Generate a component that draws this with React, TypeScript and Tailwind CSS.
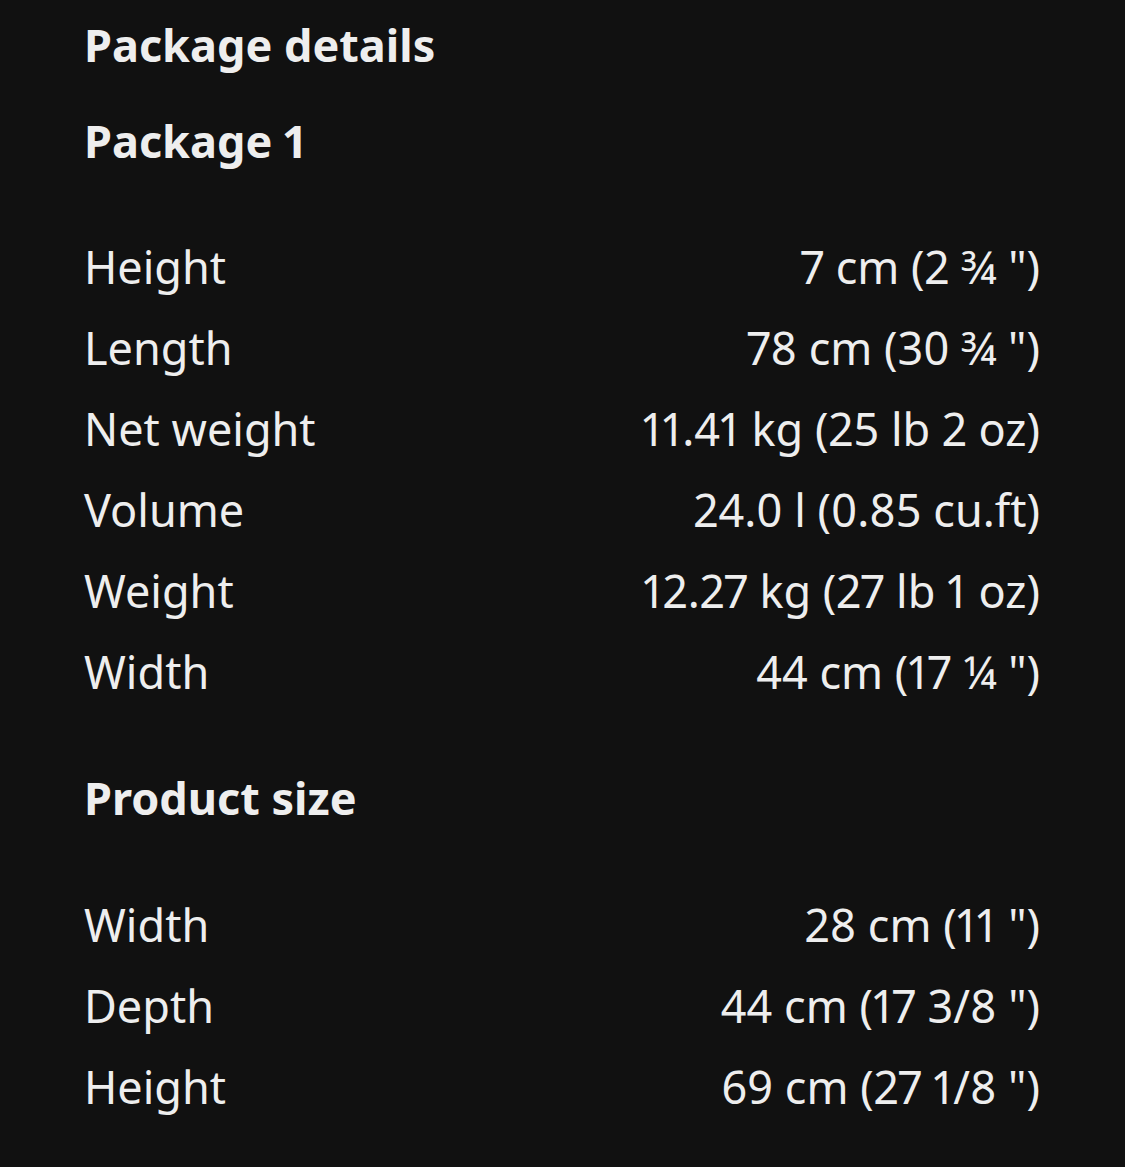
import React from "react";

const pkg: [string, string][] = [
  ["Height", '7 cm (2 ¾ ")'],
  ["Length", '78 cm (30 ¾ ")'],
  ["Net weight", "11.41 kg (25 lb 2 oz)"],
  ["Volume", "24.0 l (0.85 cu.ft)"],
  ["Weight", "12.27 kg (27 lb 1 oz)"],
  ["Width", '44 cm (17 ¼ ")'],
];

const size: [string, string][] = [
  ["Width", '28 cm (11 ")'],
  ["Depth", '44 cm (17 3/8 ")'],
  ["Height", '69 cm (27 1/8 ")'],
];

function Rows({ rows, first }: { rows: [string, string][]; first?: boolean }) {
  return (
    <div className={first ? "mt-[55px] flex flex-col" : "mt-[56px] flex flex-col"}>
      {rows.map(([k, v]) => (
        <div key={k} className="flex justify-between leading-[81px] text-[45px]">
          <span>{k}</span>
          <span>{v}</span>
        </div>
      ))}
    </div>
  );
}

export default function App() {
  return (
    <div
      className="min-h-[1167px] w-full bg-[#111111] text-[#eeeeee] pl-[84px] pr-[85px] pt-[15px] proportional-nums"
      style={{ fontFamily: '"Noto Sans", sans-serif' }}
    >
      <h2 className="text-[45px] font-bold leading-[60px]">Package details</h2>
      <h3 className="mt-9 text-[45px] font-bold leading-[60px]">Package 1</h3>
      <Rows rows={pkg} first />
      <h3 className="mt-[56px] text-[45px] font-bold leading-[60px]">Product size</h3>
      <Rows rows={size} />
    </div>
  );
}
